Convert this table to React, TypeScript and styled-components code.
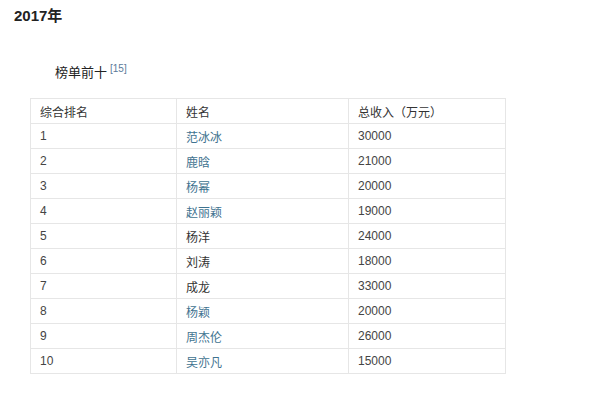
import { createGlobalStyle } from "styled-components";
import styled from "styled-components";

const GlobalStyle = createGlobalStyle`
  body {
    margin: 0;
    background: #ffffff;
    font-family: "Liberation Sans", "Noto Sans CJK SC", sans-serif;
  }
`;

interface Row {
  rank: number;
  name: string;
  income: number;
  link?: boolean;
}

const rows: Row[] = [
  { rank: 1, name: "范冰冰", income: 30000, link: true },
  { rank: 2, name: "鹿晗", income: 21000, link: true },
  { rank: 3, name: "杨幂", income: 20000, link: true },
  { rank: 4, name: "赵丽颖", income: 19000, link: true },
  { rank: 5, name: "杨洋", income: 24000 },
  { rank: 6, name: "刘涛", income: 18000 },
  { rank: 7, name: "成龙", income: 33000 },
  { rank: 8, name: "杨颖", income: 20000, link: true },
  { rank: 9, name: "周杰伦", income: 26000, link: true },
  { rank: 10, name: "吴亦凡", income: 15000, link: true },
];

const Page = styled.div`
  padding: 5px 0 0 14px;
`;

const YearTitle = styled.h2`
  margin: 0;
  font-size: 15px;
  line-height: 22px;
  font-weight: bold;
  color: #222;
`;

const Section = styled.div`
  padding: 36px 0 0 16px;
`;

const Caption = styled.div`
  padding-left: 25px;
  font-size: 13px;
  line-height: 20px;
  color: #222;
  margin-bottom: 15px;
`;

const Ref = styled.sup`
  font-size: 10px;
  color: #5b7a9a;
  margin-left: 3px;
  vertical-align: 5px;
  line-height: 0;
`;

const Table = styled.table`
  border-collapse: collapse;
  width: 476px;
  font-size: 12px;
  color: #444;
`;

const Cell = styled.td<{ $w?: number }>`
  border: 1px solid #e6e6e6;
  height: 24px;
  padding: 0 0 0 9px;
  text-align: left;
  width: ${(p) => (p.$w ? `${p.$w}px` : "auto")};
`;

const HeadCell = styled(Cell).attrs({ as: "th" })`
  font-weight: normal;
  color: #333;
`;

const Name = styled.span<{ $link?: boolean }>`
  color: ${(p) => (p.$link ? "#3f7390" : "#333")};
`;

export default function App() {
  return (
    <Page>
      <GlobalStyle />
      <YearTitle>2017年</YearTitle>
      <Section>
        <Caption>
          榜单前十<Ref>[15]</Ref>
        </Caption>
        <Table>
          <thead>
            <tr>
              <HeadCell $w={136}>综合排名</HeadCell>
              <HeadCell $w={162}>姓名</HeadCell>
              <HeadCell>总收入（万元）</HeadCell>
            </tr>
          </thead>
          <tbody>
            {rows.map((r) => (
              <tr key={r.rank}>
                <Cell>{r.rank}</Cell>
                <Cell>
                  <Name $link={r.link}>{r.name}</Name>
                </Cell>
                <Cell>{r.income}</Cell>
              </tr>
            ))}
          </tbody>
        </Table>
      </Section>
    </Page>
  );
}
